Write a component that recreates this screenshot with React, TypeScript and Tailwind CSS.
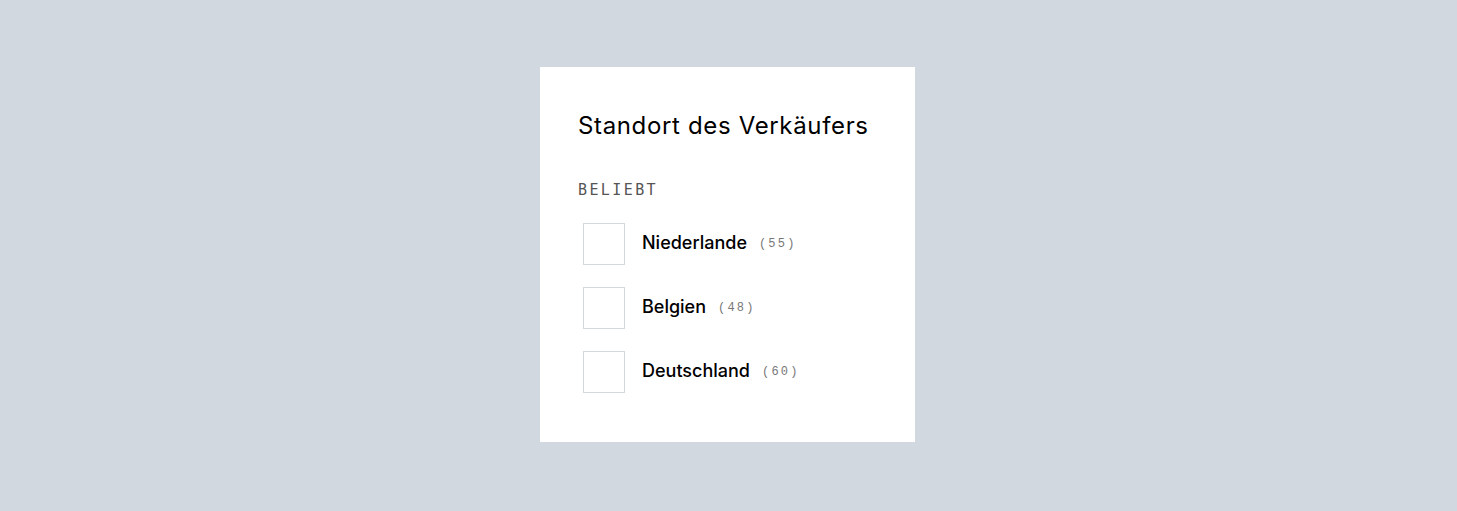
const countries = [
  { name: "Niederlande", count: 55 },
  { name: "Belgien", count: 48 },
  { name: "Deutschland", count: 60 },
]

export default function App() {
  return (
    <div className="flex min-h-[511px] w-full items-center justify-center bg-[#d2d8e0] pr-[2px] pb-[2px]">
      <div className="flex w-[375px] h-[375px] flex-col bg-white px-[38px] pt-[43px] font-['Inter',sans-serif]">
        <h2 className="text-[24px] leading-[32px] font-normal tracking-[0.65px] text-black">Standort des Verkäufers</h2>
        <div className="mt-[38px] font-['DejaVu_Sans_Mono',monospace] text-[15px] leading-[20px] tracking-[2.4px] text-[#555]">
          BELIEBT
        </div>
        <ul className="mt-[23px] flex flex-col gap-[22px] pl-[5px]">
          {countries.map((c) => (
            <li key={c.name} className="flex items-center">
              <span className="h-[42px] w-[42px] shrink-0 border border-[#d4d8de] bg-white" />
              <span className="ml-[17px] mb-[4px] flex items-center">
                <span className="text-[18px] font-medium text-black">{c.name}</span>
                <span className="ml-[12px] mt-[4px] font-['Liberation_Mono',monospace] text-[12px] tracking-[2.2px] text-[#777]">
                  ({c.count})
                </span>
              </span>
            </li>
          ))}
        </ul>
      </div>
    </div>
  )
}
